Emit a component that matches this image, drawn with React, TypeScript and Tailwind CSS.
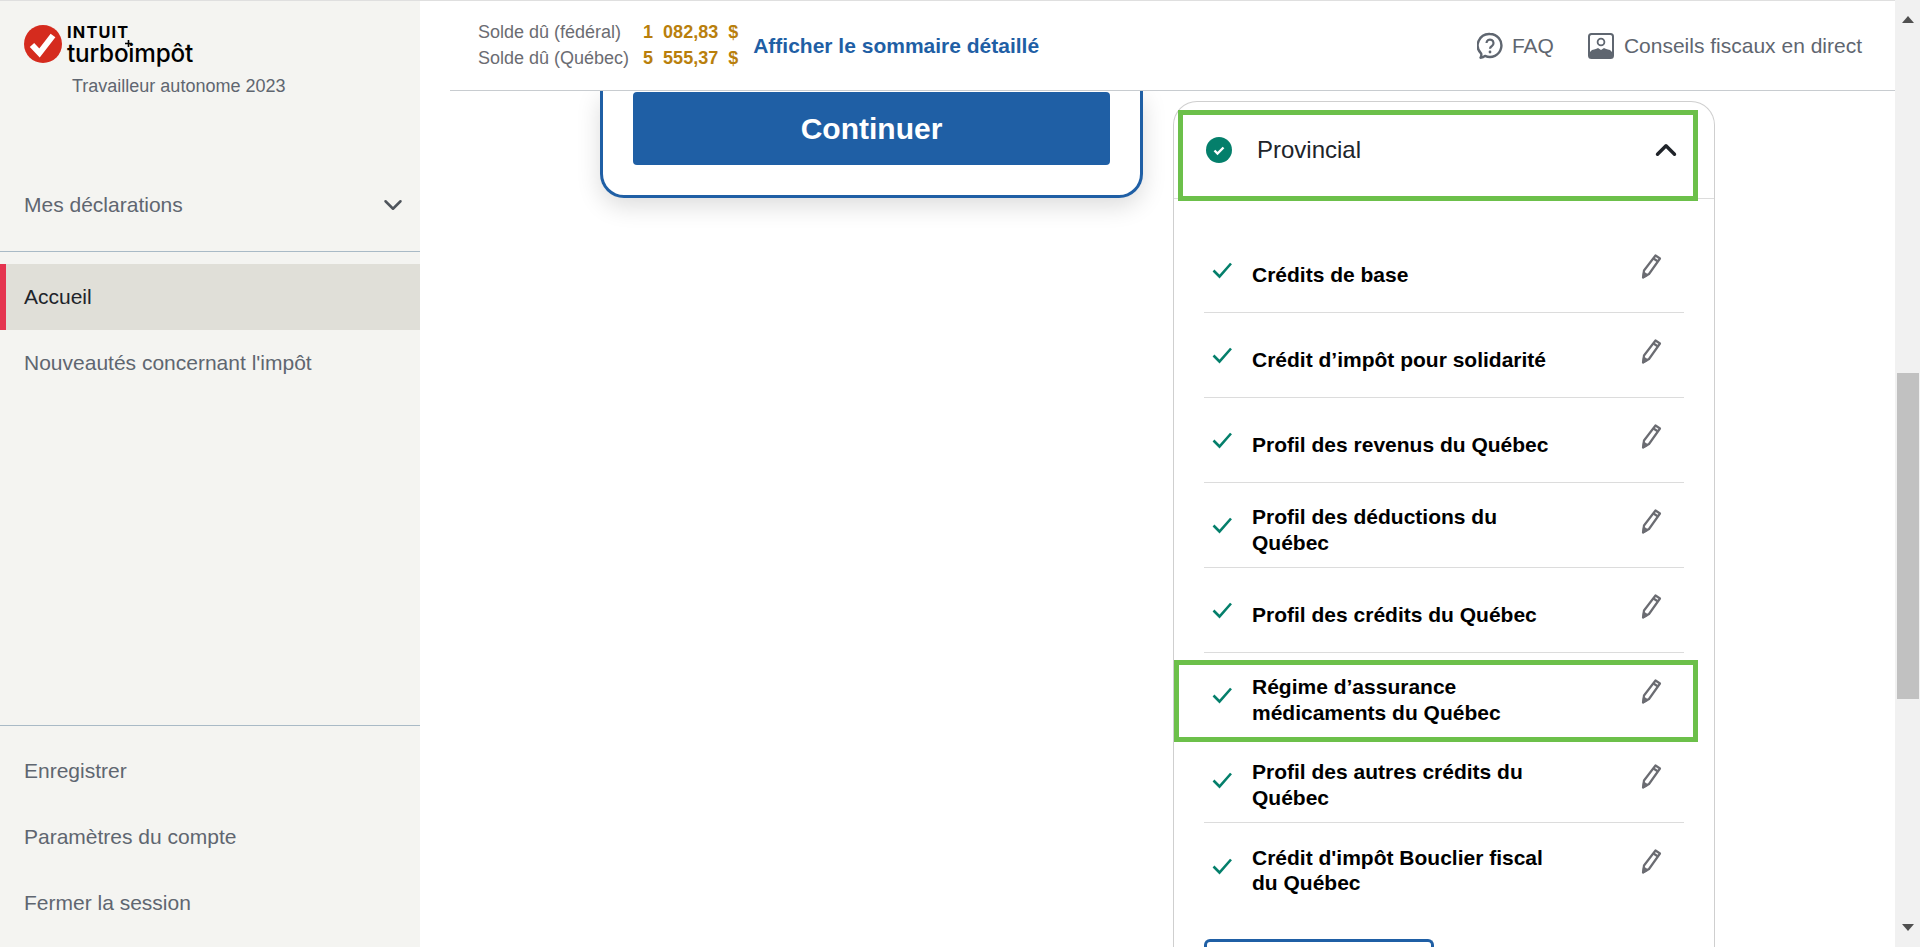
import { ChevronDown, ChevronUp } from "lucide-react";

const rows = [
  { label: "Crédits de base" },
  { label: "Crédit d’impôt pour solidarité" },
  { label: "Profil des revenus du Québec" },
  { label: "Profil des déductions du Québec" },
  { label: "Profil des crédits du Québec" },
  { label: "Régime d’assurance médicaments du Québec", active: true },
  { label: "Profil des autres crédits du Québec" },
  { label: "Crédit d'impôt Bouclier fiscal du Québec", last: true },
];

function Logo() {
  return (
    <div className="flex items-start gap-[5px]">
      <svg width="38" height="38" viewBox="0 0 38 38" className="shrink-0">
        <circle cx="19" cy="19" r="19" fill="#d52b1e" />
        <path d="M8 20l7.5 8L29 10.5" fill="none" stroke="#fff" strokeWidth="6" strokeLinejoin="miter" />
      </svg>
      <div className="relative font-['Inter',sans-serif] text-black">
        <div className="text-[16.300px] font-bold leading-[15px] tracking-[1.2px]">INTUIT</div>
        <div className="mt-px text-[24.300px] font-medium leading-[24px] tracking-[-0.2px]">turboimpôt</div>
        <svg width="7" height="7" viewBox="0 0 7 7" className="absolute left-[58px] top-[15px]">
          <path d="M3.500 0v7M0 3.500h7" stroke="#000" strokeWidth="1.600" />
        </svg>
      </div>
    </div>
  );
}

function Pencil() {
  return (
    <svg width="22" height="28" viewBox="0 0 22 28" fill="none" stroke="#6b6c72" strokeWidth="2.200" strokeLinejoin="round" className="shrink-0">
      <path d="M15.500 2.500l4.500 3-11 15.500-6 3.500 1-7z" />
      <path d="M13.500 5.500l4.500 3" />
      <path d="M3.500 24l.4-4 3 2z" fill="#6b6c72" />
    </svg>
  );
}

function Check() {
  return (
    <svg width="20" height="20" viewBox="0 0 20 20" fill="none" stroke="#047f6b" strokeWidth="2.600" className="shrink-0">
      <path d="M1.500 10.500l6 6L19 3.500" />
    </svg>
  );
}

function FaqIcon() {
  return (
    <svg width="26" height="28" viewBox="0 0 26 28" fill="none" className="shrink-0">
      <path
        d="M13 2a11.500 11.500 0 1 1-5 21.900c-1 1-2.600 1.700-4.500 1.800.9-1.200 1-2.700.7-4A11.500 11.500 0 0 1 13 2z"
        stroke="#5f6670"
        strokeWidth="2.400"
        strokeLinejoin="round"
      />
      <path d="M9.500 11a3.500 3.500 0 1 1 5.400 3c-1.300.8-1.900 1.400-1.900 2.800" stroke="#5f6670" strokeWidth="2.200" />
      <circle cx="13" cy="20" r="1.400" fill="#5f6670" />
    </svg>
  );
}

function ExpertIcon() {
  return (
    <svg width="26" height="26" viewBox="0 0 26 26" className="shrink-0">
      <rect x="1" y="1" width="24" height="24" rx="2.500" fill="#fff" stroke="#5f6670" strokeWidth="2" />
      <circle cx="13" cy="9" r="3.400" fill="none" stroke="#5f6670" strokeWidth="1.800" />
      <path d="M2 25v-6l2-2c3-1 5-1 6-2l3 2 3-2c1 1 3 1 6 2l2 2v6z" fill="#5f6670" />
    </svg>
  );
}

function Sidebar() {
  return (
    <aside className="flex h-full w-[420px] shrink-0 flex-col bg-[#f4f4f1] font-['Liberation_Sans',sans-serif] text-[21px] text-[#5f6670]">
      <div className="pl-6 pt-6">
        <Logo />
        <div className="mt-[9px] pl-[48px] text-[18px] leading-[24px]">Travailleur autonome 2023</div>
      </div>
      <div className="mt-[83px] flex h-[71px] items-center justify-between border-b border-[#a9bac6] pb-[23px] pl-6 pr-[12px]">
        <span>Mes déclarations</span>
        <ChevronDown size={30} strokeWidth={2} className="text-[#4f555c]" />
      </div>
      <div className="mt-3 flex h-[66px] items-center border-l-[6px] border-[#e5344f] bg-[#e0dfd8] pl-[18px] text-[#20242a]">Accueil</div>
      <div className="flex h-[66px] items-center pl-6">Nouveautés concernant l'impôt</div>
      <div className="mt-auto flex flex-col border-t border-[#a9bac6] pb-[11px] pt-[12px]">
        <div className="flex h-[66px] items-center pl-6">Enregistrer</div>
        <div className="flex h-[66px] items-center pl-6">Paramètres du compte</div>
        <div className="flex h-[66px] items-center pl-6">Fermer la session</div>
      </div>
    </aside>
  );
}

function Header() {
  return (
    <header className="ml-[30px] flex h-[90px] shrink-0 items-center justify-between border-b border-[#c8ccd0] bg-white pl-[28px] pr-[33px] font-['Liberation_Sans',sans-serif]">
      <div className="flex items-center">
        <div className="grid grid-cols-[auto_auto] gap-x-[14px] text-[18px] leading-[25.500px]">
          <span className="text-[#6b6c72]">Solde dû (fédéral)</span>
          <span className="font-bold text-[#b97f0c] whitespace-pre">1  082,83  $</span>
          <span className="text-[#6b6c72]">Solde dû (Québec)</span>
          <span className="font-bold text-[#b97f0c] whitespace-pre">5  555,37  $</span>
        </div>
        <a className="ml-[15px] text-[21px] font-bold text-[#1f5fa5]">Afficher le sommaire détaillé</a>
      </div>
      <div className="flex items-center text-[21px] text-[#5f6670]">
        <FaqIcon />
        <span className="ml-[9px]">FAQ</span>
        <span className="ml-[34px]"><ExpertIcon /></span>
        <span className="ml-[10px]">Conseils fiscaux en direct</span>
      </div>
    </header>
  );
}

function Row({ label, active, last }: { label: string; active?: boolean; last?: boolean }) {
  return (
    <div className={`relative mx-[30px] flex h-[85px] items-center pl-[8px] pr-[22px] ${last ? "" : "border-b border-[#dcdcdc]"}`}>
      <Check />
      <span className="ml-[20px] w-[310px] pt-[9px] text-[21px] font-bold leading-[25.500px] text-black">{label}</span>
      <span className="ml-auto -mt-[7px]"><Pencil /></span>
      {active && <div className="absolute -left-[30px] -right-[14px] top-[7px] bottom-[-5px] border-[5px] border-[#6cc04a]" />}
    </div>
  );
}

function Panel() {
  return (
    <div className="mt-[10px] flex w-[542px] shrink-0 flex-col rounded-t-[24px] border border-b-0 border-[#cfcfcf] font-['Liberation_Sans',sans-serif]">
      <div className="relative flex h-[97px] shrink-0 items-center justify-between border-b border-[#dcdcdc] pl-[32px] pr-[31px]">
        <div className="flex items-center">
          <svg width="26" height="26" viewBox="0 0 26 26">
            <circle cx="13" cy="13" r="13" fill="#047f6b" />
            <path d="M8.500 13.500l3 3 6-6" fill="none" stroke="#fff" strokeWidth="2.400" />
          </svg>
          <span className="ml-[25px] text-[24px] text-[#20242a]">Provincial</span>
        </div>
        <ChevronUp size={34} strokeWidth={2.400} className="text-[#20242a]" />
        <div className="absolute left-[4px] right-[16px] top-[8px] h-[91px] border-[5px] border-[#6cc04a]" />
      </div>
      <div className="flex flex-col pt-[29px]">
        {rows.map((row) => (
          <Row key={row.label} {...row} />
        ))}
      </div>
      <div className="mx-[30px] mt-[31px] h-[60px] w-[230px] shrink-0 rounded-t-[6px] border-[3px] border-b-0 border-[#1f5fa5]" />
    </div>
  );
}

function Scrollbar() {
  return (
    <div className="flex h-full w-[25px] shrink-0 flex-col items-center bg-[#f1f1f1]">
      <div className="mt-[16px] h-0 w-0 border-x-[6px] border-b-[7px] border-x-transparent border-b-[#505050]" />
      <div className="mt-[350px] h-[326px] w-[22px] shrink-0 bg-[#c1c1c1]" />
      <div className="mt-auto mb-[16px] h-0 w-0 border-x-[6px] border-t-[7px] border-x-transparent border-t-[#505050]" />
    </div>
  );
}

export default function App() {
  return (
    <div className="flex h-screen w-screen overflow-hidden bg-white">
      <div className="flex h-full min-w-0 flex-1 flex-col">
        <div className="h-px shrink-0 bg-[#dfdfdf]" />
        <div className="flex min-h-0 flex-1">
          <Sidebar />
          <div className="flex min-w-0 flex-1 flex-col">
            <Header />
            <main className="flex min-h-0 flex-1 items-start gap-[30px] overflow-hidden pl-[180px]">
              <div className="w-[543px] shrink-0 rounded-b-[24px] border-[3px] border-t-0 border-[#1f5fa5] bg-white px-[30px] pb-[30px] pt-[1px] shadow-[0_8px_24px_rgba(0,0,0,0.14)] font-['Liberation_Sans',sans-serif]">
                <button className="flex h-[73px] w-full items-center justify-center rounded-[4px] bg-[#1f5fa5] text-[30px] font-bold text-white">Continuer</button>
              </div>
              <Panel />
            </main>
          </div>
        </div>
      </div>
      <Scrollbar />
    </div>
  );
}
